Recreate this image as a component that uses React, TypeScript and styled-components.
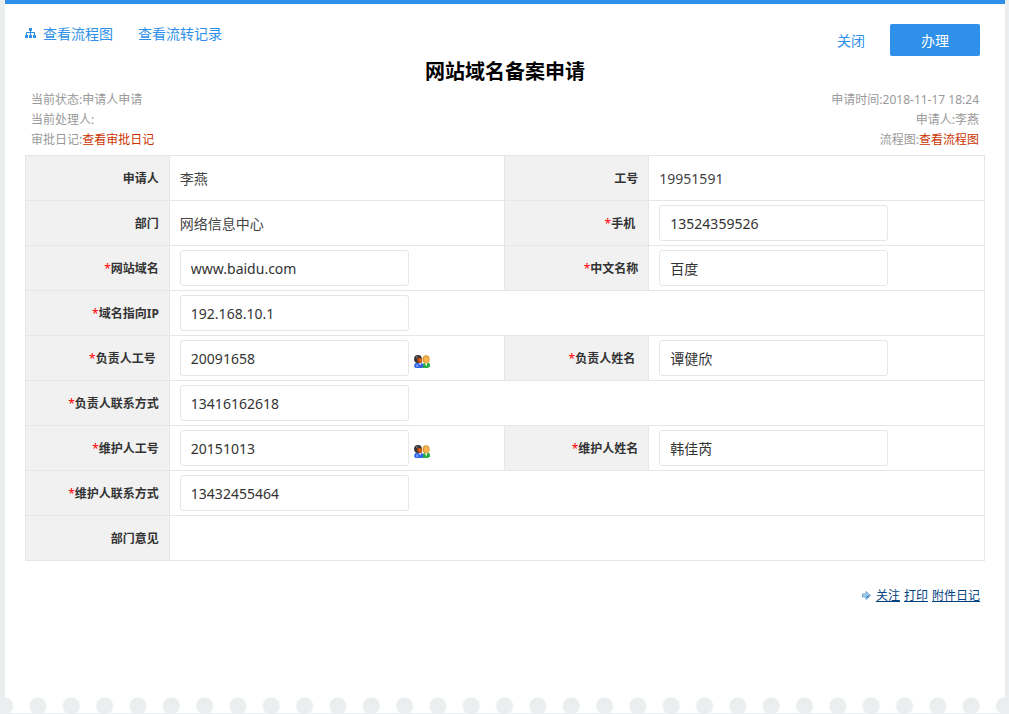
import React from "react";
import styled, { createGlobalStyle } from "styled-components";

const BLUE = "#2e90e8";

const GlobalStyle = createGlobalStyle`
  * { box-sizing: border-box; }
  body {
    margin: 0;
    background: #eaeeef;
    color: #333;
    font-family: "Noto Sans", "Noto Sans CJK SC", sans-serif;
    font-size: 14px;
    line-height: 20px;
  }
`;

const Page = styled.main`
  display: flex;
  flex-direction: column;
  min-height: calc(100vh - 1px);
  margin: 0 4px 1px 5px;
  border-top: 4px solid ${BLUE};
  background: #fff;
`;

const Content = styled.div`
  flex: 1;
  padding: 20px 20px 0;
`;

const Toolbar = styled.header`
  display: flex;
  justify-content: space-between;
  padding-right: 5px;
`;

const LinkGroup = styled.nav`
  display: flex;
  align-items: center;
  gap: 25px;
  height: 20px;
`;

const ToolLink = styled.a`
  display: flex;
  align-items: center;
  gap: 7px;
  color: ${BLUE};
  text-decoration: none;
`;

const ActionGroup = styled.div`
  display: flex;
  gap: 25px;
`;

const TextButton = styled.button`
  padding: 2px 0 0;
  border: 0;
  background: none;
  color: ${BLUE};
  font: inherit;
`;

const PrimaryButton = styled.button`
  width: 90px;
  height: 32px;
  padding: 2px 0 0;
  border: 0;
  border-radius: 2px;
  background: ${BLUE};
  color: #fff;
  font: inherit;
`;

const Title = styled.h1`
  margin: 0;
  color: #000;
  font-size: 20px;
  line-height: 32px;
  text-align: center;
`;

const Meta = styled.section`
  display: flex;
  justify-content: space-between;
  padding: 2px 6px 5px;
  color: #999;
  font-size: 12px;
`;

const MetaColumn = styled.div<{ $end?: boolean }>`
  text-align: ${(p) => (p.$end ? "right" : "left")};
`;

const MetaLink = styled.a`
  color: #cc3300;
  text-decoration: none;
`;

const FormTable = styled.table`
  width: 100%;
  table-layout: fixed;
  border-collapse: collapse;
`;

const Col = styled.col<{ $width: string }>`
  width: ${(p) => p.$width};
`;

const LabelCell = styled.th`
  height: 45px;
  padding: 2px 10px 0;
  border: 1px solid #e6e6e6;
  background: #f1f1f1;
  font-size: 12px;
  font-weight: 700;
  text-align: right;
`;

const ValueCell = styled.td`
  height: 45px;
  padding: 0 10px;
  border: 1px solid #e6e6e6;
`;

const Required = styled.span`
  color: #f00;
  font-weight: 400;
`;

const Plain = styled.div`
  padding-top: 2px;
  color: #444;
`;

const Field = styled.div`
  display: flex;
  align-items: center;
  gap: 5px;
`;

const TextInput = styled.input`
  width: 229px;
  height: 36px;
  padding: 0 10px;
  border: 1px solid #e6e6e6;
  border-radius: 3px;
  background: #fff;
  color: #333;
  font: inherit;
  outline: 0;
`;

const PickerButton = styled.button`
  display: flex;
  padding: 6px 0 0;
  border: 0;
  background: none;
`;

const Footer = styled.footer`
  display: flex;
  align-items: center;
  justify-content: flex-end;
  gap: 4px;
  padding: 25px 5px 0;
  font-size: 12px;
`;

const FooterLink = styled.a`
  color: #004280;
`;

const ArrowSlot = styled.span`
  display: flex;
  margin-right: 1px;
`;

const Scallops = styled.div`
  height: 16px;
  background-image: radial-gradient(circle at 50% 9px, #eaeeef 8px, #fff 9px);
  background-size: 33px 16px;
  background-position: -17px 0;
  background-repeat: round no-repeat;
`;

const TreeIcon = () => (
  <svg width="11" height="12" viewBox="0 0 11 12" fill={BLUE} shapeRendering="crispEdges" aria-hidden="true">
    <path d="M4 0h3v3H6v1h4v3h1v3H8V7h1V5H6v2h1v3H4V7h1V5H2v2h1v3H0V7h1V4h4V3H4z" />
  </svg>
);

const PeopleIcon = () => (
  <svg width="16" height="13" viewBox="0 0 16 13" aria-hidden="true">
    <path d="M8.5 13V10.5Q9 7.5 12 7.3Q15.7 7.5 16 9.5V12H14.5V13Z" fill="#2fae45" />
    <path d="M10.5 7.5L12.3 11.5L13.5 7.5Z" fill="#eaf8e8" />
    <ellipse cx="12.1" cy="4.2" rx="3.5" ry="4" fill="#d9932f" />
    <ellipse cx="12.4" cy="4.8" rx="2.4" ry="3" fill="#ffb54d" />
    <path d="M10 2Q12 0 14.5 2L13 3Z" fill="#e6b04b" />
    <path d="M.3 12V10Q1 7.4 4.5 7.3Q8.7 7.5 9.3 10V12L8 13H1.5Z" fill="#2f62e4" />
    <path d="M2 9.5Q3.3 8.4 4.5 10V12H2Z" fill="#6c94fa" />
    <path d="M4.6 7.7L6.3 10.5L7.5 8Z" fill="#dce8ff" />
    <circle cx="4" cy="4" r="3.9" fill="#333" />
    <path d="M3.2 3.5Q6 2 8 3.5V7Q6.5 9 4.5 7.8L3 5.5Z" fill="#b84a14" />
    <path d="M5 4H7.5V6.5H5Z" fill="#e26120" />
    <path d="M1.5 2.5L3 1L4.4 1.7L2.6 3.3Z" fill="#777" />
  </svg>
);

const ArrowIcon = () => (
  <svg width="9" height="10" viewBox="0 0 9 10" aria-hidden="true">
    <path d="M.5 3H4V.5L8.5 4.5L4 8.5V6H.5Z" fill="#a9d8f2" stroke="#5b94c4" strokeWidth=".8" />
    <path d="M4.5 4.5H8L4.5 7.6Z" fill="#3f7dbb" />
  </svg>
);

type Item = {
  id: string;
  label: string;
  value?: string;
  edit?: boolean;
  picker?: boolean;
  spaced?: boolean;
};

const rows: Item[][] = [
  [
    { id: "applicant", label: "申请人", value: "李燕" },
    { id: "staffNo", label: "工号", value: "19951591" },
  ],
  [
    { id: "department", label: "部门", value: "网络信息中心" },
    { id: "mobile", label: "手机", value: "13524359526", edit: true, spaced: true },
  ],
  [
    { id: "domain", label: "网站域名", value: "www.baidu.com", edit: true },
    { id: "siteName", label: "中文名称", value: "百度", edit: true },
  ],
  [{ id: "ip", label: "域名指向IP", value: "192.168.10.1", edit: true }],
  [
    { id: "ownerNo", label: "负责人工号", value: "20091658", edit: true, picker: true, spaced: true },
    { id: "ownerName", label: "负责人姓名", value: "谭健欣", edit: true, spaced: true },
  ],
  [{ id: "ownerPhone", label: "负责人联系方式", value: "13416162618", edit: true }],
  [
    { id: "keeperNo", label: "维护人工号", value: "20151013", edit: true, picker: true },
    { id: "keeperName", label: "维护人姓名", value: "韩佳芮", edit: true },
  ],
  [{ id: "keeperPhone", label: "维护人联系方式", value: "13432455464", edit: true }],
  [{ id: "opinion", label: "部门意见" }],
];

function FormItem({ item, wide }: { item: Item; wide: boolean }) {
  return (
    <>
      <LabelCell scope="row">
        {item.edit ? (
          <label htmlFor={item.id}>
            <Required>*</Required>
            {item.label}
            {item.spaced && "\u00a0"}
          </label>
        ) : (
          item.label
        )}
      </LabelCell>
      <ValueCell colSpan={wide ? 3 : 1}>
        {item.edit ? (
          <Field>
            <TextInput id={item.id} type="text" defaultValue={item.value} />
            {item.picker && (
              <PickerButton type="button" aria-label="选择人员">
                <PeopleIcon />
              </PickerButton>
            )}
          </Field>
        ) : (
          item.value && <Plain>{item.value}</Plain>
        )}
      </ValueCell>
    </>
  );
}

export default function App() {
  return (
    <>
      <GlobalStyle />
      <Page>
        <Content>
          <Toolbar>
            <LinkGroup>
              <ToolLink href="#chart">
                <TreeIcon />
                查看流程图
              </ToolLink>
              <ToolLink href="#records">查看流转记录</ToolLink>
            </LinkGroup>
            <ActionGroup>
              <TextButton type="button">关闭</TextButton>
              <PrimaryButton type="button">办理</PrimaryButton>
            </ActionGroup>
          </Toolbar>
          <Title>网站域名备案申请</Title>
          <Meta>
            <MetaColumn>
              <div>当前状态:申请人申请</div>
              <div>当前处理人:</div>
              <div>
                审批日记:<MetaLink href="#log">查看审批日记</MetaLink>
              </div>
            </MetaColumn>
            <MetaColumn $end>
              <div>申请时间:2018-11-17 18:24</div>
              <div>申请人:李燕</div>
              <div>
                流程图:<MetaLink href="#chart">查看流程图</MetaLink>
              </div>
            </MetaColumn>
          </Meta>
          <FormTable>
            <colgroup>
              <Col $width="15%" />
              <Col $width="35%" />
              <Col $width="15%" />
              <Col $width="35%" />
            </colgroup>
            <tbody>
              {rows.map((row) => (
                <tr key={row[0].id}>
                  {row.map((item) => (
                    <FormItem key={item.id} item={item} wide={row.length === 1} />
                  ))}
                </tr>
              ))}
            </tbody>
          </FormTable>
          <Footer>
            <ArrowSlot>
              <ArrowIcon />
            </ArrowSlot>
            <FooterLink href="#follow">关注</FooterLink>
            <FooterLink href="#print">打印</FooterLink>
            <FooterLink href="#attachments">附件日记</FooterLink>
          </Footer>
        </Content>
        <Scallops />
      </Page>
    </>
  );
}
